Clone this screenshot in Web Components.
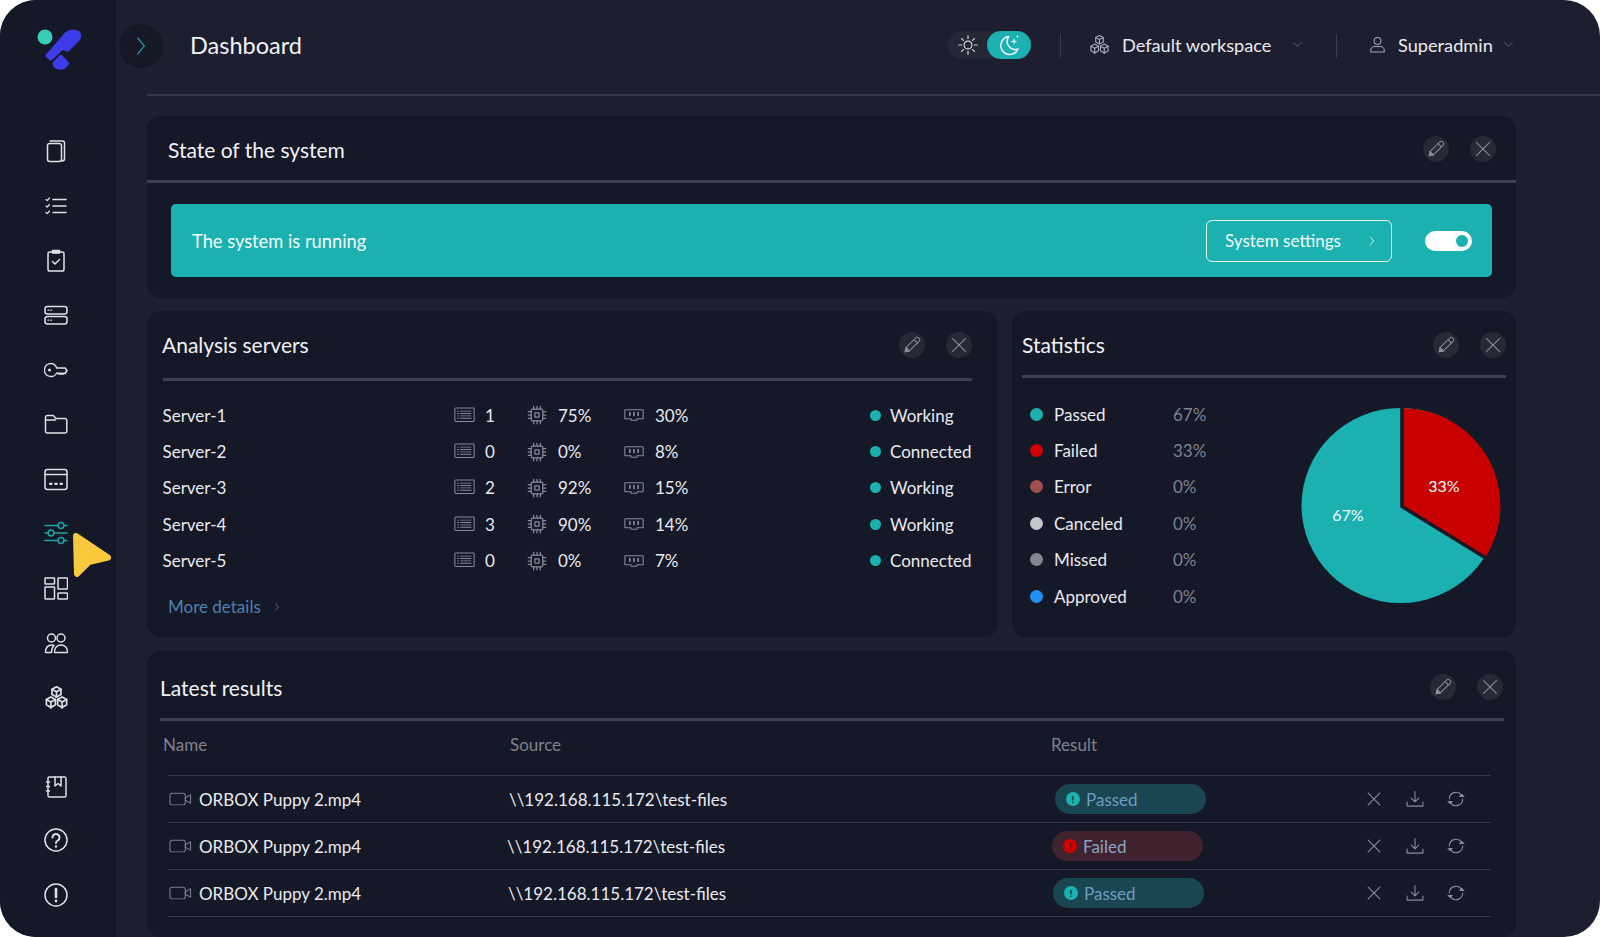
<!DOCTYPE html>
<html lang="en">
<head>
<meta charset="utf-8">
<title>Dashboard</title>
<style>
  html, body { margin: 0; height: 100%; background: #fff; overflow: hidden; }
  body { font-family: Lato, "Noto Sans", sans-serif; color: #e9eaef; }
</style>
</head>
<body>
<app-shell>
  <side-nav slot="nav"></side-nav>
  <top-bar slot="top"></top-bar>
  <panel-card title="State of the system" style="--pad-l:21px;--pad-r:20px;--rule-l:0px;--rule-r:0px;--head-h:64px;--head-top:1px;--title-top:2px">
    <system-banner></system-banner>
  </panel-card>
  <div class="pair" style="display:grid;grid-template-columns:851px 504px;gap:14px;margin-top:13px">
    <panel-card title="Analysis servers" style="--pad-l:15px;--pad-r:26px;--rule-l:16px;--rule-r:26px;--head-h:67px;--head-top:1px;--title-bottom:2px">
      <server-list></server-list>
    </panel-card>
    <panel-card title="Statistics" style="--pad-l:10px;--pad-r:10px;--rule-l:10px;--rule-r:10px;--head-h:64px">
      <stats-view></stats-view>
    </panel-card>
  </div>
  <panel-card title="Latest results" style="--pad-l:13px;--pad-r:13px;--rule-l:13px;--rule-r:12px;--head-h:67px;--head-top:5px;--title-top:2px;flex:1;margin-top:14px">
    <results-table></results-table>
  </panel-card>
</app-shell>

<script>
const ICONS = {
  "chevron-right": '<path d="M8 4l8 8-8 8"/>',
  "chevron-down": '<path d="M4 8l8 8 8-8"/>',
  close: '<path d="M5 5l14 14M19 5L5 19"/>',
  pencil: '<path d="M4.5 19.5l1-4.6L16.3 4.1a1.9 1.9 0 0 1 2.7 0l.9.9a1.9 1.9 0 0 1 0 2.7L9.1 18.5z"/><path d="M14.3 6.100l3.600 3.600M5.500 14.900l3.600 3.600"/><path d="M4.500 19.500l1-4.600 3.600 3.600z" fill="currentColor"/>',
  sun: '<circle cx="12" cy="12" r="4.300"/><path d="M12 2v3M12 19v3M2 12h3M19 12h3M5 5l2 2M17 17l2 2M19 5l-2 2M7 17l-2 2"/>',
  moon: '<path d="M12 3.500a9 9 0 1 0 9 12.500 8 8 0 0 1-9-12.500z"/><path d="M17 5l.8 2.700 2.700.8-2.700.8-.8 2.700-.8-2.700-2.700-.8 2.700-.8z" fill="currentColor" stroke="none"/><path d="M20.500 2l.4 1.300 1.300.4-1.300.4-.4 1.300-.4-1.300-1.300-.4 1.300-.4z" fill="currentColor" stroke="none"/>',
  cubes: '<path d="M12 2.500l4 2.200v4.600l-4 2.200-4-2.200V4.700z"/><path d="M8 4.700l4 2.200 4-2.200M12 6.900v4.600"/><path d="M7 11.500l4 2.200v4.800l-4 2.300-4-2.300v-4.800z"/><path d="M3 13.700l4 2.300 4-2.300M7 16v5.300"/><path d="M17 11.500l4 2.200v4.800l-4 2.300-4-2.300v-4.800z"/><path d="M13 13.700l4 2.300 4-2.300M17 16v5.300"/>',
  user: '<circle cx="12" cy="7.500" r="4.300"/><path d="M3.500 21.500v-2.500c0-2.500 2.500-4.500 5-4.500h7c2.500 0 5 2 5 4.500v2.500z"/>',
  copies: '<rect x="3.500" y="4.500" width="14" height="18" rx="2.200"/><path d="M6 2h12.500a2 2 0 0 1 2 2v15.500a2.500 2.500 0 0 1-2.500 2.500"/>',
  checklist: '<path d="M9 5.500h13M9 12h13M9 18.500h13"/><path d="M2 5.500l1.200 1.200L5.500 4M2 12l1.200 1.200L5.500 10.500M2 18.500l1.200 1.200L5.500 17" stroke-width="1.200"/>',
  clipboard: '<rect x="4" y="4" width="16" height="19" rx="1.800"/><path d="M8.500 2.500h7v2.500h-7z" fill="currentColor"/><path d="M8.500 13.500l2.500 2.500 4.500-4.500"/>',
  servers: '<rect x="1" y="3.500" width="22" height="7.500" rx="2.500"/><rect x="1" y="13.500" width="22" height="7.500" rx="2.500"/><path d="M4 7.200h.8M6.800 7.200h.8M4 17.200h.8M6.800 17.200h.8" stroke-width="1.300"/>',
  key: '<path d="M7 5.500a6.500 6.500 0 1 0 5.700 9.500h1.300l1 1.200 1-1.200 1 1.200 1-1.200 1 1.200 1-1.200 1.200.5 1.800-3-2-2.500H12.700A6.500 6.500 0 0 0 7 5.500z"/><circle cx="5.500" cy="12" r="1.500" fill="currentColor" stroke="none"/>',
  folder: '<path d="M1.500 5.500a2 2 0 0 1 2-2h5.800l2.700 3h9a2 2 0 0 1 1.800 2v10.500a2 2 0 0 1-2 2H3.500a2 2 0 0 1-2-2z"/><path d="M1.500 8h10"/>',
  browser: '<rect x="1" y="2.500" width="22" height="20" rx="2.500"/><path d="M1 7.500h22"/><path d="M6 16.800h1.600M11.200 16.800h1.600M16.400 16.800h1.600" stroke-width="2.200"/>',
  sliders: '<path d="M1 4.500h22M1 12h22M1 19.500h22"/><circle cx="17" cy="4.500" r="2.900" fill="#151826"/><circle cx="7" cy="12" r="2.900" fill="#151826"/><circle cx="17" cy="19.500" r="2.900" fill="#151826"/>',
  grid: '<rect x="1" y="2" width="9.500" height="6" rx=".6"/><rect x="14" y="2" width="9.500" height="11" rx=".6"/><rect x="1" y="11" width="9.500" height="12" rx=".6"/><rect x="14" y="17" width="9.500" height="6" rx=".6"/>',
  users: '<circle cx="7.500" cy="7" r="4"/><circle cx="17" cy="7" r="4"/><path d="M1.500 21.500c0-4.500 2-7.500 6.500-7.500 1 0 1.500.2 2 .5-1.500 1.500-2.500 4-2.500 7z"/><path d="M10.500 21.500c0-4.500 2.500-7.500 6.500-7.500s6.500 3 6.500 7.500z"/>',
  book: '<path d="M5 3h15.500a1.500 1.500 0 0 1 1.500 1.500v17a1.500 1.500 0 0 1-1.500 1.500H5.500A1.500 1.500 0 0 1 4 21.500V4a1 1 0 0 1 1-1z"/><path d="M11 3v9l3-2.500 3 2.500V3"/><path d="M2.500 8h3M2.500 12.500h3M2.500 17h3"/>',
  help: '<circle cx="12" cy="12" r="11"/><path d="M8.500 9.500a3.500 3.500 0 1 1 5.300 3c-1.200.7-1.800 1.300-1.800 2.500" stroke-width="2"/><circle cx="12" cy="18.500" r="1.200" fill="currentColor" stroke="none"/>',
  alert: '<circle cx="12" cy="12" r="11"/><path d="M12 6v8" stroke-width="2.600"/><circle cx="12" cy="18" r="1.400" fill="currentColor" stroke="none"/>',
  queue: '<rect x="1" y="2.500" width="22" height="17" rx="1"/><path d="M7.500 6.500h12M7.500 9.500h12M7.500 12.500h12M7.500 15.500h12M4 6.500h1.500M4 9.500h1.500M4 12.500h1.500M4 15.500h1.500"/>',
  chip: '<rect x="5" y="5" width="14" height="14" rx="2"/><rect x="9.500" y="9.500" width="5" height="5"/><path d="M8 1.500V5M12 1.500V5M16 1.500V5M8 19v3.500M12 19v3.500M16 19v3.500M1.500 8H5M1.500 12H5M1.500 16H5M19 8h3.500M19 12h3.500M19 16h3.500"/>',
  ram: '<path d="M2 5h20a1 1 0 0 1 1 1v11h-7.500v2h-7v-2H1V6a1 1 0 0 1 1-1z"/><path d="M7 8.500v4M12 8.500v4M17 8.500v4" stroke-width="2"/>',
  video: '<rect x="1" y="5" width="16" height="14" rx="2.500"/><path d="M17 10.500l5.500-3.500v10L17 13.500z"/>',
  download: '<path d="M12 3v12M7.500 11l4.500 4.500 4.500-4.500M2.500 15.500v5h19v-5"/>',
  refresh: '<path d="M4 12a8 8 0 0 1 14.500-4.700M20 12a8 8 0 0 1-14.500 4.700"/><path d="M15.500 9.500h7l-3.500-4zM8.500 14.500h-7l3.500 4z" fill="currentColor" stroke="none"/>'
};

class UiIcon extends HTMLElement {
  connectedCallback() {
    const w = this.getAttribute("w") || 24;
    const h = this.getAttribute("h") || w;
    const sw = this.getAttribute("sw") || 1.5;
    const root = this.shadowRoot || this.attachShadow({ mode: "open" });
    root.innerHTML = `
      <style>
        :host { display: inline-flex; flex: none; color: inherit; line-height: 0; }
        svg { fill: none; stroke: currentColor; stroke-linecap: round; stroke-linejoin: round; }
      </style>
      <svg width="${w}" height="${h}" viewBox="0 0 24 24" preserveAspectRatio="none" stroke-width="${sw}">${ICONS[this.getAttribute("name")]}</svg>
    `;
  }
}
customElements.define("ui-icon", UiIcon);

class AppShell extends HTMLElement {
  constructor() {
    super();
    this.attachShadow({ mode: "open" });
    this.shadowRoot.innerHTML = `
      <style>
        :host { display: flex; width: 1600px; height: 937px; position: relative; overflow: hidden; border-radius: 36px; background: #1d1f30; }
        .side { flex: none; width: 116px; }
        .main { flex: 1; min-width: 0; display: flex; flex-direction: column; }
        .line { height: 2px; margin: 3px 0 0 31px; background: #36384a; }
        .content { flex: 1; min-height: 0; display: flex; flex-direction: column; padding: 20px 84px 0 31px; }
        .cursor { position: absolute; left: 68px; top: 530px; }
      </style>
      <div class="side"><slot name="nav"></slot></div>
      <div class="main">
        <slot name="top"></slot>
        <div class="line"></div>
        <div class="content"><slot></slot></div>
      </div>
      <svg class="cursor" width="46" height="52" viewBox="0 0 46 52">
        <path d="M8 6L40 27.500 21 32 9 44z" fill="#fac83c" stroke="#fac83c" stroke-width="6" stroke-linejoin="round"/>
      </svg>
    `;
  }
}
customElements.define("app-shell", AppShell);

class SideNav extends HTMLElement {
  constructor() {
    super();
    this.attachShadow({ mode: "open" });
    const top = ["copies", "checklist", "clipboard", "servers", "key", "folder", "browser", "sliders", "grid", "users", "cubes"];
    const bottom = ["book", "help", "alert"];
    const item = name => {
      const size = name === "cubes" ? 27 : 24;
      return `<div class="item ${name === "sliders" ? "active" : ""}"><ui-icon name="${name}" w="${size}"></ui-icon></div>`;
    };
    this.shadowRoot.innerHTML = `
      <style>
        :host { display: flex; flex-direction: column; height: 937px; box-sizing: border-box; background: #151826; padding-bottom: 15px; color: #dfe0e6; }
        .logo { height: 124px; box-sizing: border-box; padding: 20px 0 0 30px; }
        .item { height: 54.6px; padding-right: 4px; display: flex; align-items: center; justify-content: center; }
        .active { color: #1aa5a6; }
        .spacer { flex: 1; }
      </style>
      <div class="logo">
        <svg width="60" height="60" viewBox="30 20 60 60">
          <circle cx="45" cy="37" r="7.500" fill="#37cdb6"/>
          <path d="M65 32.500L46 54.500q-1 1.500.5 3l3 2.500q1.500 1 3-.5L63 50l5 2L80 40q3-6-1-9-8-3.500-14 1.500z" fill="#3c3cea"/>
          <path d="M53 62l6.500-6.500q1.500-1.500 3 0l6 6.500q1 1.500 0 3l-4 4q-5 2-10-1l-1.500-2.500q-1-2 0-3.500z" fill="#3c3cea"/>
        </svg>
      </div>
      ${top.map(item).join("")}
      <div class="spacer"></div>
      ${bottom.map(item).join("")}
    `;
  }
}
customElements.define("side-nav", SideNav);

class TopBar extends HTMLElement {
  constructor() {
    super();
    this.attachShadow({ mode: "open" });
    this.shadowRoot.innerHTML = `
      <style>
        :host { display: flex; align-items: center; height: 91px; padding: 0 86px 0 3px; }
        .back { width: 44px; height: 44px; border-radius: 50%; background: #161925; display: flex; align-items: center; justify-content: center; color: #1aa5a6; }
        h1 { margin: 0 0 2px 27px; font: 400 23.500px Lato, sans-serif; color: #f1f2f5; }
        .mode { margin-left: auto; width: 83px; height: 28px; margin-bottom: 2px; border-radius: 14px; background: #252735; display: flex; align-items: center; }
        .sun { width: 39px; display: flex; justify-content: center; color: #d9dae0; }
        .moon { width: 44px; height: 28px; border-radius: 14px; background: #1bb1b0; display: flex; align-items: center; justify-content: center; color: #eef; }
        .sep { width: 1px; height: 24px; background: #3a3c4d; }
        .drop { display: flex; align-items: center; margin-bottom: 2px; font-size: 18.200px; color: #e9eaef; }
        .drop ui-icon.lead { color: #a5a7b2; }
        .drop ui-icon.chev { color: #6d6f7e; }
      </style>
      <div class="back"><ui-icon name="chevron-right" w="20" h="24" sw="1.300"></ui-icon></div>
      <h1>Dashboard</h1>
      <div class="mode">
        <div class="sun"><ui-icon name="sun" w="22" sw="1.300"></ui-icon></div>
        <div class="moon"><ui-icon name="moon" w="24" sw="1.500"></ui-icon></div>
      </div>
      <div class="sep" style="margin-left:29px"></div>
      <div class="drop" style="margin-left:27px">
        <ui-icon class="lead" name="cubes" w="23" sw="1.200"></ui-icon>
        <span style="margin-left:11px;width:170px">Default workspace</span>
        <ui-icon class="chev" name="chevron-down" w="11" h="11" sw="1.800"></ui-icon>
      </div>
      <div class="sep" style="margin-left:33px"></div>
      <div class="drop" style="margin-left:31px">
        <ui-icon class="lead" name="user" w="19" sw="1.300"></ui-icon>
        <span style="margin-left:11px;width:105px">Superadmin</span>
        <ui-icon class="chev" name="chevron-down" w="11" h="11" sw="1.800"></ui-icon>
      </div>
    `;
  }
}
customElements.define("top-bar", TopBar);

class PanelCard extends HTMLElement {
  constructor() {
    super();
    this.attachShadow({ mode: "open" });
    this.shadowRoot.innerHTML = `
      <style>
        :host { display: flex; flex-direction: column; background: #151826; border-radius: 14px; overflow: hidden; }
        .head { height: var(--head-h, 67px); box-sizing: border-box; display: flex; align-items: center; padding: var(--head-top, 3px) var(--pad-r) 0 var(--pad-l); }
        h2 { flex: 1; margin: var(--title-top, 0) 0 var(--title-bottom, 0); font: 400 21px Lato, sans-serif; color: #f1f2f5; }
        .btn { width: 26px; height: 26px; border-radius: 50%; background: #272935; display: flex; align-items: center; justify-content: center; color: #8b8d98; margin-left: 21px; }
        .rule { height: 3px; background: #3e3f50; margin: 0 var(--rule-r) 0 var(--rule-l); }
      </style>
      <div class="head">
        <h2>${this.getAttribute("title")}</h2>
        <div class="btn"><ui-icon name="pencil" w="22" sw="1.100"></ui-icon></div>
        <div class="btn"><ui-icon name="close" w="22" sw="1.200"></ui-icon></div>
      </div>
      <div class="rule"></div>
      <slot></slot>
    `;
    this.removeAttribute("title");
  }
}
customElements.define("panel-card", PanelCard);

class SystemBanner extends HTMLElement {
  constructor() {
    super();
    this.attachShadow({ mode: "open" });
    this.shadowRoot.innerHTML = `
      <style>
        :host { display: flex; align-items: center; height: 73px; margin: 21px 24px; padding: 0 20px 0 21px; box-sizing: border-box; border-radius: 5px; background: #1bb1b0; color: #f4fbfb; font-size: 18.300px; }
        .text { flex: 1; }
        .settings { width: 186px; height: 42px; box-sizing: border-box; border: 1.500px solid #e6f6f6; border-radius: 6px; display: flex; align-items: center; padding: 0 14px 0 18px; font-size: 17px; }
        .settings span { flex: 1; }
        .switch { width: 47px; height: 20px; margin-left: 33px; border-radius: 10px; background: #fff; display: flex; align-items: center; justify-content: flex-end; padding-right: 4px; box-sizing: border-box; }
        .knob { width: 12px; height: 12px; border-radius: 50%; background: #1bb1b0; }
      </style>
      <div class="text">The system is running</div>
      <div class="settings"><span>System settings</span><ui-icon name="chevron-right" w="10" h="12" sw="1.800"></ui-icon></div>
      <div class="switch"><div class="knob"></div></div>
    `;
  }
}
customElements.define("system-banner", SystemBanner);

class ServerList extends HTMLElement {
  constructor() {
    super();
    this.attachShadow({ mode: "open" });
    const rows = [
      ["Server-1", 1, "75%", "30%", "Working"],
      ["Server-2", 0, "0%", "8%", "Connected"],
      ["Server-3", 2, "92%", "15%", "Working"],
      ["Server-4", 3, "90%", "14%", "Working"],
      ["Server-5", 0, "0%", "7%", "Connected"]
    ];
    this.shadowRoot.innerHTML = `
      <style>
        :host { display: block; padding: 16px 26px 20px 15.500px; font-size: 17px; color: #e9eaef; }
        .row { display: grid; grid-template-columns: 291.500px 31px 44px 29px 66px 31px 215px 1fr; align-items: center; height: 36.400px; }
        ui-icon { color: #868996; }
        ui-icon[name="chip"] { margin-left: -2.500px; }
        .status { display: flex; align-items: center; gap: 9px; white-space: nowrap; }
        .dot { width: 11px; height: 11px; border-radius: 50%; background: #1bb1b0; }
        .more { display: flex; align-items: center; margin: 18px 0 0 5.500px; height: 20px; color: #4a82ad; }
        .more ui-icon { margin-left: 12px; color: #6d6f7e; }
      </style>
      ${rows.map(r => `
        <div class="row">
          <span>${r[0]}</span>
          <ui-icon name="queue" w="21" h="19" sw="1.200"></ui-icon><span>${r[1]}</span>
          <ui-icon name="chip" w="20" sw="1.500"></ui-icon><span>${r[2]}</span>
          <ui-icon name="ram" w="20" h="18" sw="1.300"></ui-icon><span>${r[3]}</span>
          <div class="status"><span class="dot"></span><span>${r[4]}</span></div>
        </div>`).join("")}
      <div class="more">More details<ui-icon name="chevron-right" w="8" h="10" sw="2"></ui-icon></div>
    `;
  }
}
customElements.define("server-list", ServerList);

class StatsView extends HTMLElement {
  constructor() {
    super();
    this.attachShadow({ mode: "open" });
    const rows = [
      ["Passed", "67%", "#1bb1b0"],
      ["Failed", "33%", "#d00000"],
      ["Error", "0%", "#a04f4f"],
      ["Canceled", "0%", "#c4c5ca"],
      ["Missed", "0%", "#85868f"],
      ["Approved", "0%", "#2291f5"]
    ];
    this.shadowRoot.innerHTML = `
      <style>
        :host { display: flex; justify-content: space-between; padding: 18px 15px 0 18px; font-size: 17px; color: #e9eaef; }
        .row { display: grid; grid-template-columns: 13px 119px auto; column-gap: 11px; align-items: center; height: 36.400px; }
        .dot { width: 13px; height: 13px; border-radius: 50%; }
        .pct { color: #7f8290; margin-left: -11px; }
        svg { margin-top: 11px; }
        text { font-family: Lato, sans-serif; font-size: 16px; fill: #f4fbfb; text-anchor: middle; }
      </style>
      <div>
        ${rows.map(r => `<div class="row"><span class="dot" style="background:${r[2]}"></span><span>${r[0]}</span><span class="pct">${r[1]}</span></div>`).join("")}
      </div>
      <svg width="200" height="197" viewBox="0 0 200 200" preserveAspectRatio="none">
        <circle cx="99.500" cy="100" r="99" fill="#1bb1b0"/>
        <path d="M101 100V1A99 99 0 0 1 184 153z" fill="#c80000"/>
        <path d="M101 0V101L186 154" fill="none" stroke="#151826" stroke-width="3.500"/>
        <text x="143" y="86">33%</text>
        <text x="47" y="116">67%</text>
      </svg>
    `;
  }
}
customElements.define("stats-view", StatsView);

class ResultsTable extends HTMLElement {
  constructor() {
    super();
    this.attachShadow({ mode: "open" });
    const rows = [
      { result: "Passed", source: 0, pill: 3 },
      { result: "Failed", source: -2, pill: 0 },
      { result: "Passed", source: -1, pill: 1 }
    ];
    this.shadowRoot.innerHTML = `
      <style>
        :host { display: block; font-size: 17px; color: #e9eaef; padding: 0 12px 0 13px; }
        .cols { display: grid; grid-template-columns: 347px 541px 1fr; align-items: center; height: 54px; box-sizing: border-box; padding: 0 0 6px 3px; color: #7f8290; }
        .row { display: grid; grid-template-columns: 341px 543px 1fr; align-items: center; height: 47px; padding-top: 1px; margin: 0 13px 0 8px; border-top: 1.500px solid #34364a; box-sizing: border-box; }
        .row:last-child { border-bottom: 1.500px solid #34364a; height: 48px; }
        .name { display: flex; align-items: center; gap: 7px; padding-left: 1px; }
        .name ui-icon { color: #7b7e8c; }
        .actions ui-icon { color: #8a8c98; }
        .pill { width: 151px; height: 30px; border-radius: 15px; display: flex; align-items: center; gap: 6px; padding-left: 11px; box-sizing: border-box; }
        .pill.passed { background: #194650; color: #6c9ec2; }
        .pill.failed { background: #40232f; color: #8ba2c8; }
        .badge { width: 14px; height: 14px; border-radius: 50%; display: flex; align-items: center; justify-content: center; font: 700 10px Lato, sans-serif; }
        .passed .badge { background: #1bb1b0; color: #123; }
        .failed .badge { background: #d00000; color: #40232f; }
        .result { display: flex; align-items: center; }
        .actions { margin-left: auto; display: flex; align-items: center; gap: 21px; padding-right: 25px; }
      </style>
      <div class="cols"><span>Name</span><span>Source</span><span>Result</span></div>
      ${rows.map(r => `
        <div class="row">
          <div class="name"><ui-icon name="video" w="23" h="20" sw="1.100"></ui-icon><span>ORBOX Puppy 2.mp4</span></div>
          <span style="margin-left:${r.source}px">\\\\192.168.115.172\\test-files</span>
          <div class="result">
            <div class="pill ${r.result.toLowerCase()}" style="margin-left:${r.pill}px"><span class="badge">!</span><span>${r.result}</span></div>
            <div class="actions">
              <ui-icon name="close" w="20" sw="1.300"></ui-icon>
              <ui-icon name="download" w="20" sw="1.300"></ui-icon>
              <ui-icon name="refresh" w="20" sw="1.300"></ui-icon>
            </div>
          </div>
        </div>`).join("")}
    `;
  }
}
customElements.define("results-table", ResultsTable);
</script>
</body>
</html>
